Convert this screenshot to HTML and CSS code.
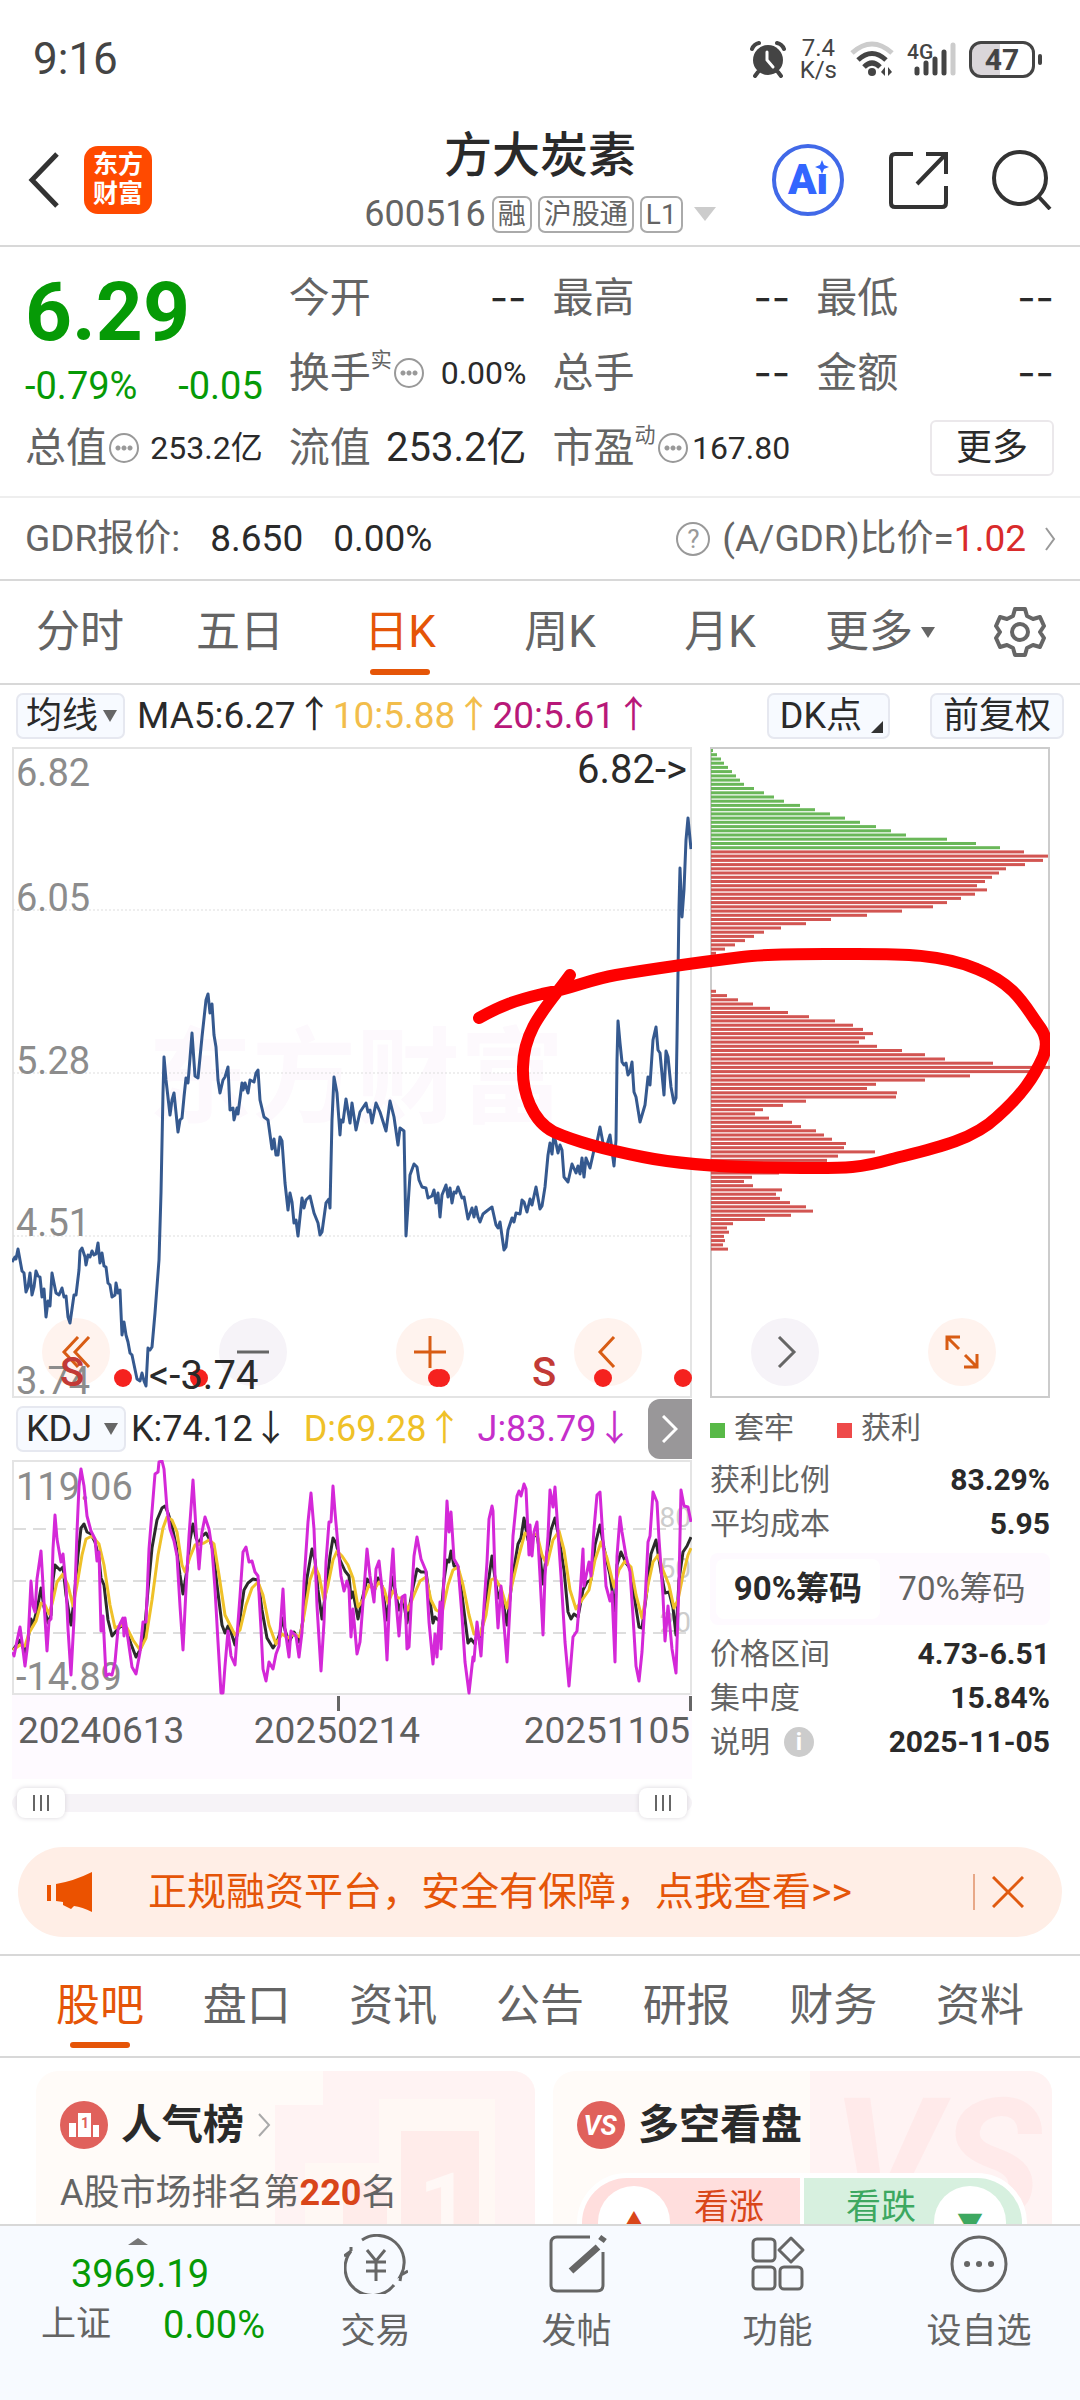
FILE: index.html
```html
<!DOCTYPE html>
<html lang="zh-CN">
<head>
    <meta charset="UTF-8">
    <meta name="viewport" content="width=device-width, initial-scale=1.0">
    <title>方大炭素 600516</title>
    <link rel="stylesheet" href="styles.css">
</head>
<body>
    <div class="status-bar">
        <span class="clock">9:16</span>
        <div class="status-icons">
            <svg class="alarm" viewBox="0 0 38 38" width="38" height="38">
                <circle cx="19" cy="20" r="15" fill="#444"/>
                <path d="M3 9 Q5 4 10 3 M35 9 Q33 4 28 3 M9 32 L6 36 M29 32 L32 36" stroke="#444" stroke-width="4" fill="none" stroke-linecap="round"/>
                <path d="M18 12 V20 L24 27" stroke="#fff" stroke-width="3" fill="none" stroke-linecap="round"/>
            </svg>
            <span class="speed">7.4<br>K/s</span>
            <svg viewBox="0 0 44 36" width="44" height="36" fill="none" stroke-width="5">
                <path d="M2 12 Q22 -6 42 12" stroke="#ccc"/>
                <path d="M8 19 Q22 6 36 19 M14 26 Q22 18 30 26" stroke="#444"/>
                <circle cx="22" cy="31" r="4" fill="#444"/>
                <path d="M31 31 l4 -5 v9 z M38 26 v9 l4 -4 z" fill="#444"/>
            </svg>
            <div class="signal">
                <span>4G</span>
                <svg viewBox="0 0 42 34" width="42" height="34" stroke-width="5" stroke-linecap="round">
                    <path d="M3 27 V31 M12 21 V31 M21 17 V31 M30 10 V31" stroke="#444"/>
                    <path d="M39 3 V31" stroke="#ccc"/>
                </svg>
            </div>
            <div class="battery"><span>47</span></div>
        </div>
    </div>

    <header>
        <div class="header-left">
            <button class="icon-btn" aria-label="返回">
                <svg viewBox="0 0 32 56" width="32" height="56" fill="none" stroke="#333" stroke-width="5"><path d="M29 2 L4 28 L29 54"/></svg>
            </button>
            <div class="app-logo">东方<br>财富</div>
        </div>
        <div class="header-title">
            <h1>方大炭素</h1>
            <p>600516<span class="tag">融</span><span class="tag">沪股通</span><span class="tag">L1</span><i class="caret"></i></p>
        </div>
        <div class="header-right">
            <button class="ai-btn" aria-label="Ai">Ai
                <svg viewBox="0 0 14 14" width="14" height="14"><path d="M7 0 L9 5 L14 7 L9 9 L7 14 L5 9 L0 7 L5 5 Z" fill="#36f"/></svg>
            </button>
            <button class="icon-btn" aria-label="分享">
                <svg viewBox="0 0 60 60" width="60" height="60" fill="none" stroke="#333" stroke-width="4">
                    <path d="M25 4 H7 Q3 4 3 8 V53 Q3 57 7 57 H54 Q58 57 58 53 V36 M38 4 H58 V24 M58 4 L29 34"/>
                </svg>
            </button>
            <button class="icon-btn" aria-label="搜索">
                <svg viewBox="0 0 60 60" width="60" height="60" fill="none" stroke="#333" stroke-width="4"><circle cx="28" cy="28" r="26"/><path d="M46 46 L58 59"/></svg>
            </button>
        </div>
    </header>

    <main>
        <section class="quote">
            <div class="price">
                <strong>6.29</strong>
                <p><span>-0.79%</span><span>-0.05</span></p>
            </div>
            <div class="cell"><label>今开</label><b class="none">--</b></div>
            <div class="cell"><label>最高</label><b class="none">--</b></div>
            <div class="cell"><label>最低</label><b class="none">--</b></div>
            <div class="cell"><label>换手<sup>实</sup></label><i class="dots"></i><b class="small">0.00%</b></div>
            <div class="cell"><label>总手</label><b class="none">--</b></div>
            <div class="cell"><label>金额</label><b class="none">--</b></div>
            <div class="cell"><label>总值</label><i class="dots"></i><b class="small">253.2亿</b></div>
            <div class="cell"><label>流值</label><b>253.2亿</b></div>
            <div class="cell"><label>市盈<sup>动</sup></label><i class="dots"></i><b class="small">167.80</b></div>
            <div class="cell"><button class="more-btn">更多</button></div>
        </section>

        <a class="gdr" href="#">
            <span class="gdr-label">GDR报价:</span>
            <span>8.650</span>
            <span>0.00%</span>
            <span class="gdr-ratio"><i class="question">?</i>(A/GDR)比价=<em>1.02</em></span>
            <svg viewBox="0 0 12 24" width="12" height="24" fill="none" stroke="#999" stroke-width="2"><path d="M2 1 L10 12 L2 23"/></svg>
        </a>

        <nav class="period-tabs">
            <button>分时</button>
            <button>五日</button>
            <button class="active">日K</button>
            <button>周K</button>
            <button>月K</button>
            <button>更多<i class="caret"></i></button>
            <button aria-label="设置">
                <svg viewBox="0 0 52 52" width="52" height="52" fill="none" stroke="#666" stroke-width="4" stroke-linejoin="round">
                    <path d="M21 3 H31 L33 10 L39 13 L46 11 L50 20 L46 26 L50 32 L46 41 L39 39 L33 42 L31 49 H21 L19 42 L13 39 L6 41 L2 32 L6 26 L2 20 L6 11 L13 13 L19 10 Z"/>
                    <circle cx="26" cy="26" r="8"/>
                </svg>
            </button>
        </nav>

        <div class="ma-row">
            <span class="select-box"><select aria-label="指标"><option>均线</option></select></span>
            <span>MA5:6.27↑</span>
            <span class="yellow">10:5.88↑</span>
            <span class="pink">20:5.61↑</span>
            <button class="chip-btn corner">DK点</button>
            <button class="chip-btn">前复权</button>
        </div>

        <section class="charts">
            <div class="controls">
                <button class="orange" aria-label="最左"><svg viewBox="0 0 32 32" width="32" height="32"><path d="M18 1 L4 16 L18 31 M29 1 L15 16 L29 31"/></svg></button>
                <button aria-label="缩小"><svg viewBox="0 0 32 32" width="32" height="32"><path d="M0 16 H32"/></svg></button>
                <button class="orange" aria-label="放大"><svg viewBox="0 0 32 32" width="32" height="32"><path d="M0 16 H32 M16 0 V32"/></svg></button>
                <button class="orange" aria-label="左移"><svg viewBox="0 0 32 32" width="32" height="32"><path d="M22 1 L8 16 L22 31"/></svg></button>
                <button aria-label="右移"><svg viewBox="0 0 32 32" width="32" height="32"><path d="M10 1 L25 16 L10 31"/></svg></button>
                <button class="orange" aria-label="全屏"><svg viewBox="0 0 36 36" width="36" height="36"><path d="M16 3 H3 V16 M3 3 L15 15 M20 33 H33 V20 M33 33 L21 21"/></svg></button>
            </div>

            <svg class="price-chart" viewBox="0 0 680 651">
                <text class="watermark" x="136" y="368">东方财富</text>
                <rect x="1" y="1" width="678" height="649" class="frame"/>
                <path d="M1 163 H679 M1 326 H679 M1 489 H679" class="grid-dot"/>
                <g class="axis">
                    <text x="4" y="39">6.82</text>
                    <text x="4" y="164">6.05</text>
                    <text x="4" y="327">5.28</text>
                    <text x="4" y="489">4.51</text>
                    <text x="4" y="647">3.74</text>
                </g>
                <polyline id="priceLine" class="price-line"/>
                <g fill="#f5221f">
                    <circle cx="111" cy="631" r="9"/>
                    <circle cx="187" cy="631" r="9"/>
                    <circle cx="425" cy="631" r="9"/>
                    <circle cx="429" cy="631" r="9"/>
                    <circle cx="591" cy="631" r="9"/>
                    <circle cx="671" cy="631" r="9"/>
                </g>
                <text class="sell" x="48" y="639">S</text>
                <text class="sell" x="520" y="639">S</text>
                <text class="mark" x="675" y="36" text-anchor="end">6.82-&gt;</text>
                <text class="mark" x="137" y="642">&lt;-3.74</text>
            </svg>

            <svg class="chip-chart" viewBox="0 0 340 651">
                <rect x="1" y="1" width="338" height="649" class="frame-dark"/>
                <g id="chipBars"></g>
            </svg>

            <svg class="pen" viewBox="0 0 1038 651">
                <path d="M467 271 C490 258 505 253 530 247 C560 242 575 233 604 228 C640 222 690 215 730 210 C760 206 800 207 845 207 C890 207 930 207 965 222 C1005 238 1013 260 1028 280 Q1038 294 1031 310 C1022 330 1010 348 985 370 C960 394 920 402 880 412 C845 422 830 421 790 421 C720 421 670 418 631 410 C590 402 560 393 542 385 C520 374 510 345 511 320 C512 280 535 260 558 228"/>
            </svg>

            <div class="kdj">
                <div class="kdj-row">
                    <span class="select-box"><select aria-label="副图"><option>KDJ</option></select></span>
                    <span>K:74.12↓</span>
                    <span class="gold">D:69.28↑</span>
                    <span class="violet">J:83.79↓</span>
                    <button class="next-btn" aria-label="展开"><svg viewBox="0 0 16 28" width="16" height="28" fill="none" stroke="#fff" stroke-width="3"><path d="M1 1 L14 14 L1 27"/></svg></button>
                </div>
                <svg class="kdj-chart" viewBox="0 0 680 235">
                    <rect x="1" y="1" width="678" height="233" class="frame"/>
                    <path d="M1 69 H679 M1 121 H679 M1 173 H679" class="grid-dash"/>
                    <g class="axis">
                        <text x="4" y="40">119.06</text>
                        <text x="4" y="230">-14.89</text>
                    </g>
                    <g class="level" text-anchor="end">
                        <text x="679" y="67">80</text>
                        <text x="679" y="118">50</text>
                        <text x="679" y="172">20</text>
                    </g>
                    <polyline id="kLine" stroke="#2b2b2b"/>
                    <polyline id="dLine" stroke="#efc128"/>
                    <polyline id="jLine" stroke="#d428d8"/>
                </svg>
                <div class="dates">
                    <span>20240613</span>
                    <span class="tick">20250214</span>
                    <span class="tick last">20251105</span>
                </div>
                <div class="range">
                    <input type="range" min="0" max="100" value="0" aria-label="开始">
                    <input type="range" min="0" max="100" value="100" aria-label="结束">
                </div>
            </div>

            <div class="chips">
                <p class="legend"><span class="lock">套牢</span><span class="gain">获利</span></p>
                <dl>
                    <dt>获利比例</dt><dd>83.29%</dd>
                    <dt>平均成本</dt><dd>5.95</dd>
                </dl>
                <div class="segment">
                    <button class="on">90%筹码</button>
                    <button>70%筹码</button>
                </div>
                <dl>
                    <dt>价格区间</dt><dd>4.73-6.51</dd>
                    <dt>集中度</dt><dd>15.84%</dd>
                    <dt>说明<i class="info">i</i></dt><dd>2025-11-05</dd>
                </dl>
            </div>
        </section>

        <div class="banner">
            <svg viewBox="0 0 46 40" width="46" height="40" fill="#eb5200"><path d="M0 13 H4 V29 H0 Z M9 12 Q27 9 45 0 V40 Q35 35 27 34 L24 37 L16 33 V30 L9 29 Z"/></svg>
            <a href="#">正规融资平台，安全有保障，点我查看&gt;&gt;</a>
            <button aria-label="关闭"><svg viewBox="0 0 32 32" width="32" height="32" stroke="#e05a10" stroke-width="3"><path d="M1 1 L31 31 M31 1 L1 31"/></svg></button>
        </div>

        <nav class="info-tabs">
            <button class="active">股吧</button>
            <button>盘口</button>
            <button>资讯</button>
            <button>公告</button>
            <button>研报</button>
            <button>财务</button>
            <button>资料</button>
        </nav>

        <section class="cards">
            <article class="card">
                <svg class="card-art" viewBox="0 0 260 170" width="260" height="170">
                    <path d="M48 0 H260 V170 H0 V34 H48 Z" fill="#fff3f3"/>
                    <path d="M30 92 H104 V28 H220 V170 H30 Z" fill="#fff8f4"/>
                    <path d="M126 60 H204 V170 H126 Z M68 112 H112 V170 H68 Z" fill="#ffecea"/>
                    <text x="144" y="164" fill="#fff8f6" font-size="88" font-weight="700">1</text>
                </svg>
                <h2>
                    <svg viewBox="0 0 48 48" width="48" height="48">
                        <circle cx="24" cy="24" r="24" fill="#e0615c"/>
                        <path d="M9 22 H16 V36 H9 Z M18 12 H31 V36 H18 Z M33 24 H39 V36 H33 Z" fill="#fff"/>
                        <text x="21" y="27" font-size="14" font-weight="700" fill="#e0615c">1</text>
                    </svg>
                    人气榜
                    <svg viewBox="0 0 14 24" width="14" height="24" fill="none" stroke="#aaa" stroke-width="2"><path d="M2 1 L12 12 L2 23"/></svg>
                </h2>
                <p>A股市场排名第<em>220</em>名</p>
            </article>
            <article class="card">
                <svg class="card-art" viewBox="0 0 260 170" width="260" height="170">
                    <path d="M18 0 H260 V170 H18 Z" fill="#fff3f3"/>
                    <text x="40" y="148" font-size="170" font-weight="700" font-style="italic" fill="#ffeaea">VS</text>
                </svg>
                <h2>
                    <svg viewBox="0 0 48 48" width="48" height="48">
                        <circle cx="24" cy="24" r="24" fill="#e0615c"/>
                        <text x="23" y="34" text-anchor="middle" font-size="27" font-weight="700" font-style="italic" fill="#fff">VS</text>
                    </svg>
                    多空看盘
                </h2>
                <div class="vote">
                    <button class="up"><i>▲</i>看涨</button>
                    <button class="down">看跌<i>▼</i></button>
                </div>
            </article>
        </section>
    </main>

    <footer>
        <a class="index" href="#">
            <i class="caret"></i>
            <strong>3969.19</strong>
            <span>上证</span><b>0.00%</b>
        </a>
        <a href="#">
            <svg viewBox="0 0 64 60" width="64" height="60" fill="none" stroke="#666" stroke-width="3">
                <path d="M18 6 A27 27 0 0 1 57 41 L64 37 M57 41 L56 47 M50 51 A27 27 0 0 1 7 17 L0 22 M7 17 V13"/>
                <path d="M23 16 L32 27 L41 16 M22 28 H42 M22 37 H42 M32 27 V47"/>
            </svg>
            交易
        </a>
        <a href="#">
            <svg viewBox="0 0 60 60" width="60" height="60" fill="none" stroke="#666" stroke-width="3">
                <path d="M43 3 H10 Q4 3 4 9 V51 Q4 57 10 57 H50 Q56 57 56 51 V18"/>
                <path d="M51 13 L24 37 M57 3 L54 7" stroke-width="7"/>
            </svg>
            发帖
        </a>
        <a href="#">
            <svg viewBox="0 0 56 56" width="56" height="56" fill="none" stroke="#666" stroke-width="3">
                <rect x="3" y="3" width="22" height="22" rx="4"/>
                <rect x="3" y="31" width="22" height="22" rx="4"/>
                <rect x="30" y="31" width="22" height="22" rx="4"/>
                <path d="M41 2 L53 14 L41 26 L29 14 Z" stroke-linejoin="round"/>
            </svg>
            功能
        </a>
        <a href="#">
            <svg viewBox="0 0 60 60" width="60" height="60" fill="none" stroke="#666" stroke-width="3">
                <circle cx="30" cy="30" r="27"/>
                <path d="M18 30 h.1 M30 30 h.1 M42 30 h.1" stroke-width="6" stroke-linecap="round"/>
            </svg>
            设自选
        </a>
    </footer>

    <script src="charts.js"></script>
</body>
</html>
```
FILE: styles.css
```css
:root {
    --orange: #e55508;
    --green: #069a06;
    --text: #2a2a2a;
    --gray: #646464;
    --line: #d8d8d8;
}

* {
    box-sizing: border-box;
    margin: 0;
    padding: 0;
}

body {
    display: flex;
    flex-direction: column;
    height: 100vh;
    overflow: hidden;
    font-family: Roboto, "Noto Sans CJK SC", sans-serif;
    font-size: 36px;
    line-height: 44px;
    color: var(--text);
    background-color: #fff;
}

button,
select {
    font: inherit;
    color: inherit;
    background: none;
    border: none;
    cursor: pointer;
}

a {
    color: inherit;
    text-decoration: none;
}

i,
em {
    font-style: normal;
}

svg {
    flex: none;
}

/* status bar */
.status-bar {
    display: flex;
    justify-content: space-between;
    align-items: center;
    height: 118px;
    padding: 0 38px 0 33px;
    flex: none;
    color: #444;
}

.clock {
    font-size: 44px;
}

.status-icons {
    display: flex;
    align-items: center;
    gap: 13px;
}

.speed {
    font-size: 24px;
    line-height: 22px;
    text-align: center;
}

.signal {
    display: grid;
}

.signal span,
.signal svg {
    grid-area: 1 / 1;
}

.signal span {
    font-size: 21px;
    line-height: 20px;
    font-weight: 500;
}

.signal svg {
    margin-left: 7px;
}

.battery {
    position: relative;
    width: 66px;
    height: 37px;
    margin-right: 7px;
    border: 3px solid #444;
    border-radius: 12px;
    background: linear-gradient(90deg, #dad6da 47%, #fff 47%);
    text-align: center;
}

.battery span {
    display: block;
    font-size: 30px;
    line-height: 31px;
    font-weight: 700;
}

.battery::after {
    content: "";
    position: absolute;
    right: -10px;
    top: 10px;
    width: 4px;
    height: 11px;
    border-radius: 2px;
    background-color: #444;
}

/* header */
header {
    display: grid;
    grid-template-columns: 1fr auto 1fr;
    align-items: center;
    height: 129px;
    padding: 0 28px 4px;
    flex: none;
    border-bottom: 2px solid var(--line);
}

.header-left,
.header-right {
    display: flex;
    align-items: center;
}

.header-left {
    gap: 24px;
}

.header-right {
    gap: 44px;
    justify-content: flex-end;
}

.icon-btn {
    display: flex;
}

.app-logo {
    width: 68px;
    height: 68px;
    padding-top: 4px;
    border-radius: 14px;
    background-color: #ff4a00;
    color: #fff;
    font-size: 25px;
    line-height: 29px;
    font-weight: 700;
    text-align: center;
}

.header-title {
    padding-top: 8px;
    text-align: center;
}

.header-title h1 {
    font-size: 48px;
    line-height: 60px;
    font-weight: 500;
}

.header-title p {
    display: flex;
    align-items: center;
    justify-content: center;
    height: 56px;
    color: var(--gray);
}

.tag {
    height: 37px;
    margin-left: 6px;
    padding: 0 4px;
    border: 2px solid #aaa;
    border-radius: 7px;
    font-size: 28px;
    line-height: 33px;
}

.caret {
    display: inline-block;
    border: 11px solid transparent;
    border-top: 14px solid #ccc;
    border-bottom: none;
    margin-left: 11px;
}

.ai-btn {
    position: relative;
    width: 72px;
    height: 72px;
    border: 4px solid #4169e8;
    border-radius: 50%;
    color: #36f;
    font-size: 42px;
    font-weight: 900;
}

.ai-btn svg {
    position: absolute;
    right: 11px;
    top: 12px;
    background-color: #fff;
}

main {
    flex: 1;
    min-height: 0;
    overflow-y: auto;
    scrollbar-width: none;
}

/* quote */
.quote {
    display: grid;
    grid-template-columns: repeat(4, minmax(0, 1fr));
    grid-template-rows: repeat(3, 75px);
    column-gap: 26px;
    padding: 13px 26px 11px 25px;
    border-bottom: 2px solid #eee;
}

.price {
    grid-row: span 2;
    color: var(--green);
}

.price strong {
    display: block;
    padding-top: 8px;
    font-size: 82px;
    line-height: 88px;
    font-weight: 700;
}

.price p {
    display: flex;
    justify-content: space-between;
    padding-top: 8px;
    font-size: 38px;
    white-space: nowrap;
}

.cell {
    display: flex;
    align-items: center;
    font-size: 41px;
    white-space: nowrap;
}

.cell label {
    color: var(--gray);
}

.cell b {
    margin-left: auto;
    font-size: 40px;
    font-weight: 400;
}

.cell .small {
    font-size: 32px;
}

.cell .none {
    font-family: Inter, sans-serif;
}

.cell sup {
    font-size: 21px;
    line-height: 20px;
    vertical-align: 20px;
}

.dots {
    width: 30px;
    height: 30px;
    margin-left: 2px;
    border: 2px solid #999;
    border-radius: 50%;
    background:
        radial-gradient(circle at 7px 13px, #999 2px, transparent 3px),
        radial-gradient(circle at 13px 13px, #999 2px, transparent 3px),
        radial-gradient(circle at 19px 13px, #999 2px, transparent 3px);
}

.more-btn {
    width: 124px;
    height: 56px;
    margin-left: auto;
    border: 2px solid #ebe8eb;
    border-radius: 6px;
    font-size: 36px;
}

.gdr {
    display: flex;
    align-items: center;
    gap: 30px;
    height: 83px;
    padding: 0 24px 0 25px;
    border-bottom: 2px solid var(--line);
    font-size: 37px;
}

.gdr-label,
.gdr-ratio {
    color: var(--gray);
}

.gdr-ratio {
    display: flex;
    align-items: center;
    margin-left: auto;
    margin-right: -12px;
}

.gdr-ratio em {
    color: #d92b2b;
}

.question {
    width: 34px;
    height: 34px;
    margin-right: 12px;
    border: 2px solid #999;
    border-radius: 50%;
    color: #999;
    font-size: 26px;
    line-height: 31px;
    text-align: center;
}

/* tabs */
.period-tabs,
.info-tabs {
    height: 104px;
    border-bottom: 2px solid var(--line);
    color: var(--gray);
}

.period-tabs {
    display: grid;
    grid-template-columns: repeat(6, 4fr) 3fr;
}

.info-tabs {
    display: flex;
    justify-content: space-between;
    padding: 0 56px;
    border-top: 2px solid var(--line);
}

.period-tabs button,
.info-tabs button {
    display: flex;
    align-items: center;
    justify-content: center;
    position: relative;
    font-size: 44px;
}

.period-tabs .caret {
    border-width: 11px 7px 0;
    border-top-color: #666;
    margin-left: 8px;
}

.active {
    color: var(--orange);
}

.active::after {
    content: "";
    position: absolute;
    left: 50%;
    bottom: 8px;
    width: 60px;
    height: 6px;
    margin-left: -30px;
    border-radius: 3px;
    background-color: var(--orange);
}

/* moving averages */
.ma-row {
    display: flex;
    align-items: center;
    height: 62px;
    padding: 0 16px;
    white-space: nowrap;
}

.ma-row > span {
    font-size: 37px;
}

.select-box {
    position: relative;
    margin-right: 12px;
}

.select-box::after {
    content: "";
    position: absolute;
    right: 8px;
    top: 17px;
    border: 7px solid transparent;
    border-top: 12px solid #666;
    border-bottom: none;
    pointer-events: none;
}

.select-box select,
.chip-btn {
    display: block;
    height: 46px;
    padding: 0 24px 0 8px;
    appearance: none;
    border: 2px solid #e6e8f0;
    border-radius: 7px;
    background-color: #f7faff;
    font-size: 36px;
    line-height: 40px;
}

.chip-btn {
    position: relative;
    margin-left: 40px;
    padding: 0 11px;
}

.corner {
    margin-left: auto;
    padding-right: 26px;
}

.corner::after {
    content: "";
    position: absolute;
    right: 5px;
    bottom: 4px;
    border-left: 12px solid transparent;
    border-bottom: 12px solid #333;
}

.yellow {
    color: #f2bd4b;
}

.pink {
    color: #b81879;
}

.gold {
    color: #efc128;
}

.violet {
    color: #c52fca;
}

/* charts */
.charts {
    display: grid;
    grid-template-columns: minmax(0, 2fr) minmax(0, 1fr);
    column-gap: 18px;
    padding: 0 30px 0 12px;
}

.charts > svg {
    display: block;
    width: 100%;
    pointer-events: none;
}

.price-chart {
    grid-area: 1 / 1;
}

.chip-chart {
    grid-area: 1 / 2;
}

.pen {
    grid-area: 1 / 1 / 2 / 3;
    fill: none;
    stroke: #fe0000;
    stroke-width: 12;
    stroke-linecap: round;
    stroke-linejoin: round;
}

.controls {
    grid-area: 1 / 1 / 2 / 3;
    display: flex;
    justify-content: space-between;
    align-items: flex-end;
    padding: 0 54px 12px 30px;
}

.controls button {
    display: flex;
    align-items: center;
    justify-content: center;
    width: 68px;
    height: 68px;
    border-radius: 50%;
    background-color: #f6f3f8;
}

.controls .orange {
    background-color: #fff3ee;
}

.controls path {
    fill: none;
    stroke: #666;
    stroke-width: 3;
}

.controls .orange path {
    stroke: #d85c14;
}

.frame,
.frame-dark {
    fill: none;
    stroke: #e4e4e4;
    stroke-width: 2;
}

.frame-dark {
    stroke: #ccc;
}

.grid-dot {
    stroke: #ddd;
    stroke-width: 1;
    stroke-dasharray: 2 2;
}

.grid-dash {
    stroke: #ddd;
    stroke-width: 2;
    stroke-dasharray: 13 7;
}

.axis {
    fill: #8c8c8c;
    font-size: 38px;
}

.level {
    fill: #ccc;
    font-size: 28px;
}

.mark {
    font-size: 40px;
    fill: var(--text);
}

.sell {
    font-size: 40px;
    font-weight: 500;
    fill: #c23a36;
}

.watermark {
    font-size: 104px;
    font-weight: 700;
    fill: #fdf9fd;
}

.price-line {
    fill: none;
    stroke: #35598f;
    stroke-width: 3;
    stroke-linejoin: round;
}

.kdj-chart polyline {
    fill: none;
    stroke-width: 3;
    stroke-linejoin: round;
}

.kdj-row {
    display: flex;
    align-items: center;
    height: 62px;
    padding-left: 4px;
    white-space: nowrap;
}

.kdj-row .select-box {
    margin-right: 5px;
}

.kdj-row select {
    width: 110px;
}

.kdj-row > span + span {
    margin-right: 15px;
}

.next-btn {
    display: flex;
    align-items: center;
    justify-content: center;
    width: 44px;
    height: 60px;
    margin-left: auto;
    border-radius: 12px 0 0 12px;
    background-color: #999799;
}

.kdj-chart {
    display: block;
    width: 100%;
}

.dates {
    display: grid;
    grid-template-columns: 1fr auto 1fr;
    height: 84px;
    padding: 14px 2px 0 6px;
    background-color: #fefaff;
    color: #5f5f5f;
    font-size: 37px;
}

.dates .tick {
    position: relative;
    margin-right: 34px;
}

.dates .last {
    margin-right: 0;
    text-align: right;
}

.dates .tick::before {
    content: "";
    position: absolute;
    left: 50%;
    top: -13px;
    height: 15px;
    border-left: 3px solid #666;
}

.dates .last::before {
    left: auto;
    right: -2px;
}

.range {
    display: grid;
    grid-template-rows: 18px;
    align-items: center;
    margin: 15px 0 35px;
    padding: 0 5px;
    border-radius: 9px;
    background-color: #f6f3f7;
}

.range input {
    grid-area: 1 / 1;
    height: 30px;
    appearance: none;
    background: none;
    pointer-events: none;
}

.range input::-webkit-slider-thumb {
    appearance: none;
    pointer-events: auto;
    width: 48px;
    height: 30px;
    border-radius: 8px;
    box-shadow: 0 0 5px #d8d4da;
    background:
        linear-gradient(#666, #666) 16px 7px / 2px 16px no-repeat,
        linear-gradient(#666, #666) 23px 7px / 2px 16px no-repeat,
        linear-gradient(#666, #666) 30px 7px / 2px 16px no-repeat,
        #fff;
}

/* chip distribution info */
.chips {
    font-size: 30px;
    color: var(--gray);
}

.legend {
    display: flex;
    gap: 43px;
    height: 60px;
    align-items: center;
}

.legend span::before {
    content: "";
    display: inline-block;
    width: 15px;
    height: 15px;
    margin-right: 9px;
}

.legend .lock::before {
    background-color: #58b947;
}

.legend .gain::before {
    background-color: #ee4a4a;
}

.chips dl {
    display: grid;
    grid-template-columns: auto 1fr;
    grid-auto-rows: 44px;
}

.chips dt {
    display: flex;
    align-items: center;
}

.chips dd {
    text-align: right;
    color: var(--text);
    font-weight: 700;
}

.info {
    width: 30px;
    height: 30px;
    margin-left: 14px;
    border-radius: 50%;
    background-color: #ccc;
    color: #fff;
    font-size: 24px;
    line-height: 30px;
    font-weight: 700;
    text-align: center;
}

.segment {
    display: flex;
    height: 72px;
    margin: 7px 0;
    padding: 6px;
    border-radius: 8px;
    background-color: #fefaff;
}

.segment button {
    flex: 1;
    border-radius: 8px;
    font-size: 33px;
    white-space: nowrap;
}

.segment .on {
    background-color: #fff;
    color: var(--text);
    font-weight: 700;
}

/* banner */
.banner {
    display: flex;
    align-items: center;
    height: 90px;
    margin: 0 18px 17px;
    padding: 0 38px 0 29px;
    border-radius: 45px;
    background-color: #ffeee6;
    color: var(--orange);
    font-size: 39px;
}

.banner a {
    margin-left: 55px;
    white-space: nowrap;
}

.banner button {
    display: flex;
    margin-left: auto;
    padding: 2px 0 2px 17px;
    border-left: 2px solid #e8a888;
}

/* cards */
.cards {
    display: grid;
    grid-template-columns: 1fr 1fr;
    gap: 18px;
    padding: 13px 28px 30px 36px;
}

.card {
    position: relative;
    height: 300px;
    padding: 30px 24px;
    overflow: hidden;
    border-radius: 22px;
    background-color: #fffbf8;
}

.card-art {
    position: absolute;
    right: 0;
    top: 0;
}

.card h2 {
    display: flex;
    align-items: center;
    gap: 13px;
    position: relative;
    height: 48px;
    font-size: 41px;
}

.card p {
    position: relative;
    margin-top: 22px;
    color: var(--gray);
}

.card em {
    color: #d9461a;
    font-weight: 700;
}

.vote {
    display: flex;
    gap: 4px;
    position: relative;
    margin: 24px 1px 0 0;
    border: 5px solid #fff;
    border-radius: 50px;
    background-color: #fff;
}

.vote button {
    display: flex;
    flex: 1;
    align-items: flex-start;
    height: 90px;
    padding: 8px 16px;
    font-size: 35px;
}

.vote .up {
    gap: 24px;
    border-radius: 45px 0 0 45px;
    background-color: #ffdedd;
    color: #d9461a;
}

.vote .down {
    justify-content: flex-end;
    gap: 18px;
    border-radius: 0 45px 45px 0;
    background-color: #d7f0df;
    color: #3da860;
}

.vote i {
    width: 72px;
    height: 72px;
    border-radius: 50%;
    background-color: #fff;
    font-size: 26px;
    line-height: 76px;
}

/* bottom bar */
footer {
    display: grid;
    grid-template-columns: 275fr 201fr 201fr 201fr 202fr;
    height: 176px;
    flex: none;
    border-top: 2px solid var(--line);
    background-color: #f7faff;
    color: var(--gray);
    font-size: 35px;
}

footer a {
    display: flex;
    flex-direction: column;
    align-items: center;
    justify-content: space-between;
    height: 128px;
    padding-top: 8px;
}

footer a svg {
    height: 60px;
}

footer .index {
    display: grid;
    grid-template-columns: auto auto;
    justify-content: space-between;
    justify-items: center;
    height: 124px;
    padding: 8px 10px 0 41px;
}

.index .caret {
    grid-column: span 2;
    border: 10px solid transparent;
    border-bottom: 7px solid #777;
    border-top: none;
    margin-left: -30px;
}

.index strong {
    grid-column: span 2;
    padding-right: 26px;
    color: var(--green);
    font-size: 38px;
    font-weight: 400;
}

.index b {
    color: var(--green);
    font-size: 38px;
    font-weight: 400;
}
```
FILE: charts.js
```js
const price = "0,515 3,510 4,512 6,502 10,524 12,526 14,545 16,540 18,526 20,548 22,540 24,524 26,529 28,530 30,550 32,542 34,570 36,554 38,559 40,526 44,546 47,548 50,541 52,550 54,549 56,570 58,576 62,548 64,548 67,523 68,504 70,501 73,510 74,518 76,508 78,510 80,504 82,508 84,507 86,496 88,516 90,506 92,519 94,520 96,536 98,538 100,550 103,548 104,536 106,546 108,543 110,588 112,575 114,588 116,595 118,606 120,608 125,632 128,634 130,626 132,634 134,639 136,601 138,603 140,600 143,566 147,513 149,446 151,346 152,310 154,333 158,368 160,353 162,346 166,385 168,373 170,371 172,350 174,331 176,336 180,286 183,329 186,331 190,290 194,253 196,247 198,266 200,257 202,288 204,300 206,333 208,346 211,333 213,330 216,320 218,363 221,361 222,373 225,361 226,367 230,336 231,343 233,336 236,346 238,333 242,335 244,326 246,323 248,353 252,370 256,373 260,402 262,392 264,408 266,408 268,390 270,394 273,436 276,463 278,446 280,455 282,476 284,473 286,489 290,451 292,461 294,453 298,449 302,466 306,476 308,488 310,485 314,456 317,452 318,461 320,373 322,330 325,346 328,388 329,373 331,375 334,352 338,376 340,356 344,383 348,365 354,356 356,365 358,363 360,376 364,356 368,365 374,384 378,354 382,370 386,398 388,381 392,384 394,489 398,428 402,417 405,420 407,433 410,440 414,441 416,451 420,449 422,443 424,456 426,446 428,470 430,448 434,438 436,450 438,441 440,456 442,445 444,446 446,440 450,451 452,450 456,472 460,461 462,470 464,460 466,470 468,475 471,467 476,463 480,460 484,478 486,481 488,475 492,503 494,500 496,483 500,471 502,475 504,466 508,467 510,453 512,455 515,465 518,452 520,458 524,440 528,462 530,459 533,440 536,408 538,396 540,407 542,387 546,406 548,398 550,403 552,430 556,435 560,417 564,426 566,419 568,427 570,411 572,430 574,411 578,421 582,403 584,400 588,380 591,396 594,401 598,388 602,419 604,393 605,313 606,274 608,296 610,315 612,318 614,316 616,328 618,325 620,315 622,345 624,350 628,375 633,358 636,330 638,338 641,293 644,280 646,303 648,306 652,348 654,304 656,310 659,340 662,356 664,351 665,293 666,226 667,160 668,121 670,170 672,143 674,93 676,71 679,102";

const j = "1,192 2,196 5,181 8,167 10,182 13,206 16,182 19,121 21,146 23,152 25,119 29,91 32,142 35,191 37,161 39,159 41,89 43,55 45,79 49,102 51,94 54,126 56,169 59,215 62,159 65,72 67,26 69,9 72,26 75,56 79,71 83,79 85,101 87,92 89,171 91,156 94,216 97,214 100,215 103,202 106,169 108,164 111,158 112,176 113,158 117,186 120,207 124,214 128,192 131,162 134,162 137,89 141,39 143,14 146,12 147,2 150,1 152,9 155,49 158,69 162,81 165,96 168,146 171,190 174,129 177,76 181,20 184,69 187,109 190,72 193,57 197,69 200,89 203,129 206,182 209,233 211,233 213,206 216,171 219,196 223,205 225,176 228,136 231,92 234,87 237,102 240,101 243,112 246,116 249,169 251,209 254,221 257,202 261,209 264,194 267,186 271,129 273,169 277,197 279,171 284,176 287,197 290,172 292,122 296,62 299,33 302,69 305,146 309,211 312,162 314,102 317,62 319,62 321,26 323,52 326,86 329,116 332,131 335,121 337,129 339,177 341,149 345,194 348,182 350,156 353,116 355,89 358,116 362,142 364,109 367,101 370,129 373,162 375,200 378,129 381,89 383,129 387,176 390,137 393,135 395,189 397,187 400,129 402,96 405,77 409,99 414,111 417,162 421,204 423,174 425,197 428,142 429,189 432,116 435,41 437,72 439,52 442,99 446,106 450,156 453,202 457,233 461,197 462,201 465,162 469,196 472,146 475,102 477,59 480,46 481,51 483,116 486,168 489,126 491,152 495,202 498,146 501,76 505,36 507,31 509,36 512,24 514,29 517,95 518,65 520,96 522,72 525,62 528,116 531,175 533,116 536,76 538,30 541,47 543,27 546,72 549,116 553,182 557,226 561,177 565,171 568,136 571,89 572,126 577,102 579,116 582,69 585,35 588,32 591,79 594,126 598,141 600,132 603,202 605,96 608,57 610,72 614,96 618,112 621,156 624,206 627,221 630,192 633,142 636,82 638,76 641,32 645,42 647,79 651,136 653,181 656,146 660,189 664,213 667,122 669,30 672,46 676,47 679,62";

const k = "1,190 8,180 13,193 16,180 19,159 21,165 25,150 29,128 32,147 36,163 39,155 41,120 43,105 48,110 51,107 54,135 59,165 62,140 66,95 69,68 72,64 75,72 79,74 83,82 87,98 89,118 92,125 96,160 100,176 105,170 110,165 114,170 119,184 124,197 128,190 132,178 136,130 140,88 145,60 150,48 153,46 156,53 160,66 164,85 168,115 171,134 175,110 178,80 181,64 184,78 187,84 190,76 194,73 198,80 201,90 205,125 210,165 213,173 216,166 219,172 223,185 227,165 232,130 236,123 241,119 246,120 250,150 255,178 261,188 265,182 268,173 270,158 273,170 277,182 282,172 287,182 291,160 295,118 300,89 303,100 306,130 310,159 314,130 318,96 321,78 324,83 328,100 333,111 337,116 339,138 341,132 346,159 350,140 355,119 359,124 362,132 366,118 370,126 375,160 380,117 383,130 387,150 391,138 395,163 400,132 405,109 409,112 414,112 418,140 421,163 423,157 426,160 429,155 432,120 435,100 437,102 439,91 442,106 446,107 450,135 456,183 459,179 463,184 465,173 469,177 474,140 478,110 480,96 483,118 486,138 489,130 495,165 500,120 506,84 509,78 512,58 516,80 520,78 525,74 528,95 531,124 534,98 539,70 543,58 547,78 552,110 556,152 559,159 562,154 566,157 571,130 575,122 579,120 583,85 588,65 592,88 598,115 603,151 605,105 609,92 614,103 618,108 622,135 627,167 630,168 635,130 639,94 644,80 649,112 653,133 657,132 661,148 664,175 667,120 671,92 675,86 679,77";

const d = "1,190 8,185 13,186 17,173 24,161 29,143 33,145 37,154 41,140 45,122 51,114 56,125 61,146 65,125 70,95 74,79 80,76 87,84 92,105 98,145 103,168 110,165 115,168 121,180 128,190 134,178 140,140 146,95 151,68 155,57 160,60 165,72 170,105 173,112 178,97 183,85 187,84 192,83 197,80 202,84 207,115 213,155 218,165 223,175 228,170 234,145 240,128 246,122 251,135 257,165 264,184 270,174 276,178 282,174 288,177 293,150 298,120 303,106 307,115 312,140 316,125 321,100 325,91 330,96 336,105 341,118 346,147 352,138 357,125 362,130 367,122 372,129 376,143 381,131 386,138 391,138 396,150 402,135 408,121 414,117 419,140 424,150 430,153 436,125 441,110 446,107 451,125 457,155 462,174 468,175 474,155 479,120 483,118 489,128 495,148 500,125 507,95 513,73 518,76 525,74 530,95 535,105 541,80 547,71 552,90 558,130 564,149 570,140 577,130 583,100 589,82 595,98 602,127 607,110 613,101 619,107 624,135 630,158 636,125 641,102 646,95 651,110 657,125 662,148 666,140 671,115 676,95 679,88";

document.getElementById('priceLine').setAttribute('points', price);
document.getElementById('kLine').setAttribute('points', k);
document.getElementById('dLine').setAttribute('points', d);
document.getElementById('jLine').setAttribute('points', j);

// chip distribution, one bar per price step from top to bottom
const locked = [2, 6, 10, 13, 17, 21, 25, 29, 33, 43, 53, 63, 73, 89, 104, 119, 134, 149, 165, 180, 195, 236, 265, 289];
const profit = [
    313, 337, 332, 314, 295, 288, 281, 274, 266, 276, 264, 250, 236, 222, 191, 156, 120, 95, 70, 53, 43, 34, 24, 14, 5,
    0, 0, 0, 0, 0, 0, 0, 0,
    5, 16, 27, 42, 59, 77, 98, 124, 142, 152, 162, 154, 148, 166, 191, 214, 234, 282, 339, 326, 259, 214, 165, 156,
    186, 185, 95, 72, 52, 44, 58, 81, 90, 105, 113, 121, 135, 133, 164, 127, 116, 96, 79, 68, 41, 33, 42, 71, 65, 69,
    79, 95, 102, 80, 54, 22, 16, 18, 13, 14, 12, 17
];
const step = 498.6 / 118;

const bars = locked.concat(profit).map((width, i) => {
    const color = i < locked.length ? '#6ab759' : '#d25552';
    const y = 2 + i * step;
    return `<rect x="1" y="${y.toFixed(1)}" width="${width}" height="3" fill="${color}"/>`;
});
document.getElementById('chipBars').innerHTML = bars.join('');
```
